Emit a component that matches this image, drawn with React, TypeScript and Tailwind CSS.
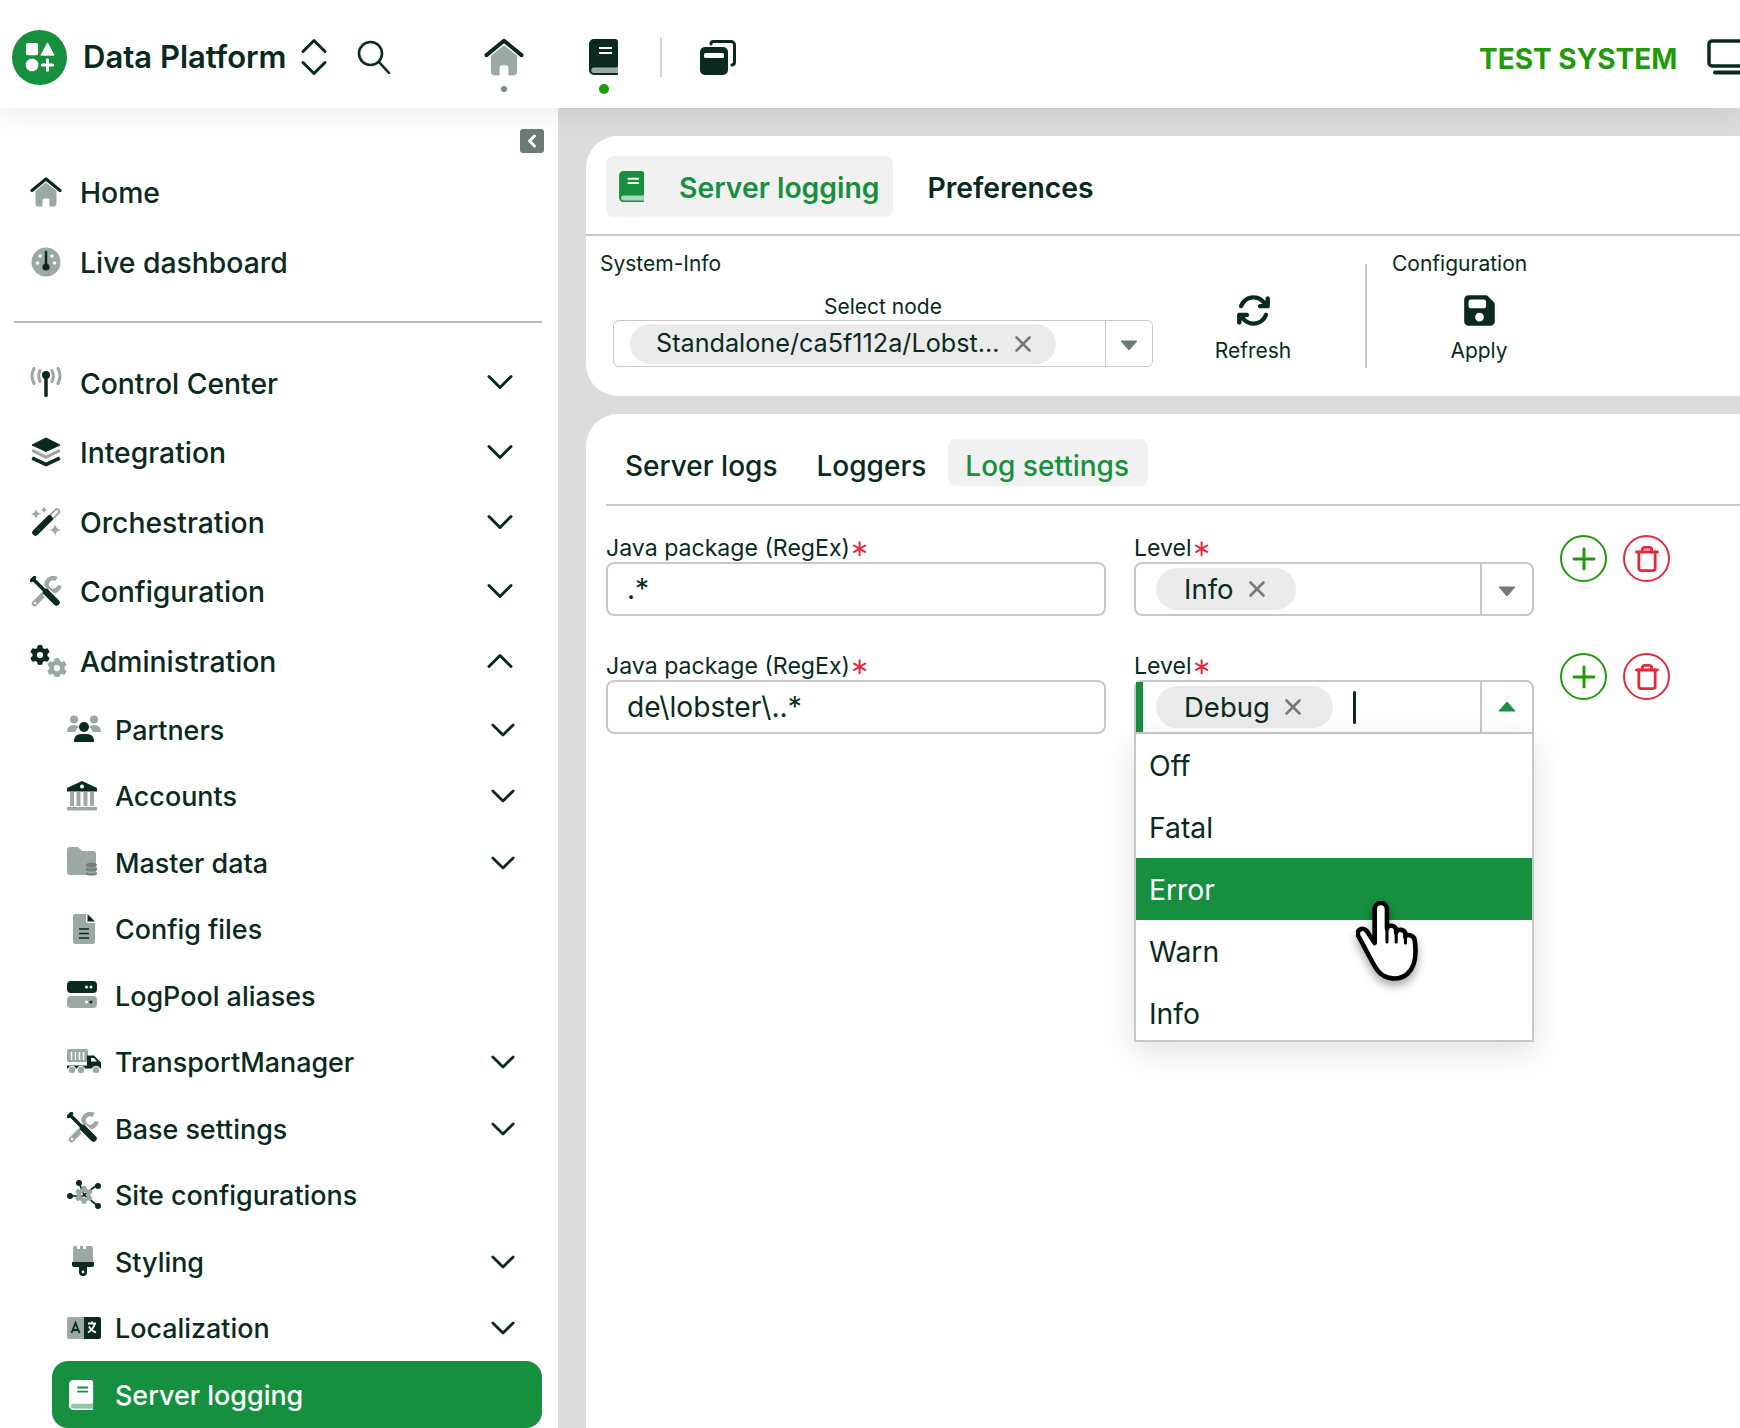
import type { ReactNode } from "react";
import { ChevronLeft, Plus, Trash, X } from "lucide-react";
import { FaArrowsRotate, FaFloppyDisk, FaGear } from "react-icons/fa6";

const D = "#0a2a20";
const G = "#9ba8a3";

function Ico({ children, w = 32, h = 32 }: { children: ReactNode; w?: number; h?: number }) {
  return (
    <svg width={w} height={h} viewBox="0 0 32 32" fill="none" className="shrink-0">
      {children}
    </svg>
  );
}

const HomeIcon = ({ w = 32, h = 32 }: { w?: number; h?: number }) => (
  <Ico w={w} h={h}>
    <path d="M5.500 15 16 6.500 26.500 15v12.500a3 3 0 0 1-3 3H19.500v-6a2 2 0 0 0-2-2h-3a2 2 0 0 0-2 2v6H8.500a3 3 0 0 1-3-3Z" fill={G} />
    <path d="M2 14.500 16 3l14 11.500" stroke={D} strokeWidth="3.200" strokeLinecap="round" strokeLinejoin="round" />
  </Ico>
);

const GaugeIcon = () => (
  <Ico>
    <circle cx="16" cy="16" r="14.500" fill={G} />
    <circle cx="7.500" cy="17" r="1.800" fill="#fff" />
    <circle cx="10" cy="10" r="1.800" fill="#fff" />
    <circle cx="22" cy="10" r="1.800" fill="#fff" />
    <circle cx="24.500" cy="17" r="1.800" fill="#fff" />
    <path d="M16 6v14" stroke={D} strokeWidth="2.500" strokeLinecap="round" />
    <circle cx="16" cy="21" r="3.600" fill={D} />
  </Ico>
);

const AntennaIcon = () => (
  <Ico>
    <path d="M4 1.500Q0 9 4 16.500M10 3.500q-2.500 5.500 0 11M28 1.500q4 7.500 0 15M22 3.500q2.500 5.500 0 11" stroke={G} strokeWidth="3" strokeLinecap="round" />
    <circle cx="16" cy="8" r="4" fill={D} />
    <path d="M16 9v19.500" stroke={D} strokeWidth="3.500" strokeLinecap="round" />
  </Ico>
);

const LayersIcon = () => (
  <Ico>
    <path d="M16 2 30 9 16 15.500 2 9Z" fill={D} stroke={D} strokeLinejoin="round" />
    <path d="M3 13.500 16 20l13-6.500 1 2-14 7-14-7Z" fill={G} stroke={G} strokeLinejoin="round" />
    <path d="M3 21 16 27l13-6 1 2.500L16 30 2 23.500Z" fill={D} stroke={D} strokeLinejoin="round" />
  </Ico>
);

const Star = ({ x, y, r }: { x: number; y: number; r: number }) => (
  <path d={`M${x} ${y - r}q.8 ${r * 0.8} ${r} ${r}q-${r * 0.8} .2 -${r} ${r}q-.2 -${r * 0.8} -${r} -${r}q${r * 0.8} -.2 ${r} -${r}Z`} fill={G} />
);

const WandIcon = () => (
  <Ico>
    <Star x={6} y={8} r={5} />
    <Star x={14} y={4} r={3.500} />
    <Star x={25} y={24} r={6} />
    <path d="M21 11.500 27 5.500" stroke={G} strokeWidth="6.500" strokeLinecap="round" />
    <path d="M21.500 11 27 5.500" stroke="#fff" strokeWidth="2.500" strokeLinecap="round" />
    <path d="M5.500 26.500 19.500 12.500" stroke={D} strokeWidth="6.500" strokeLinecap="round" />
  </Ico>
);

const ToolsIcon = () => (
  <Ico>
    <path d="M4.500 27.500 18 14" stroke={G} strokeWidth="5.500" strokeLinecap="round" />
    <circle cx="5" cy="27" r="1.300" fill="#fff" />
    <path d="M26.500 3A6.500 6.500 0 1 0 29.500 9.500" stroke={G} strokeWidth="4.500" strokeLinecap="butt" />
    <path d="M3 3 15 15" stroke="#fff" strokeWidth="6.500" />
    <path d="M16 16 26.500 26.500" stroke="#fff" strokeWidth="9" />
    <path d="M3 3 15 15" stroke={D} strokeWidth="3.500" strokeLinecap="round" />
    <path d="M4.500 1.500 1.500 4.500" stroke={D} strokeWidth="3.500" strokeLinecap="round" />
    <path d="M16 16 26.500 26.500" stroke={D} strokeWidth="6.500" strokeLinecap="round" />
  </Ico>
);

const GearsIcon = () => (
  <svg width="38" height="32" viewBox="0 0 38 32" className="shrink-0">
    <FaGear x={0} y={0} size={20} color={D} />
    <FaGear x={17} y={13} size={20} color={G} />
  </svg>
);

const UsersIcon = () => (
  <svg width="34" height="28" viewBox="0 0 34 28" className="shrink-0">
    <circle cx="7" cy="4.500" r="4" fill={G} />
    <circle cx="27" cy="4.500" r="4" fill={G} />
    <path d="M0 17q0-7 7-7 3 0 5 2-3 2-4 5Z M34 17q0-7-7-7-3 0-5 2 3 2 4 5Z" fill={G} />
    <circle cx="17" cy="12" r="5" fill={D} />
    <path d="M7 27q0-8 7-8h6q7 0 7 8Z" fill={D} />
  </svg>
);

const BankIcon = () => (
  <svg width="30" height="30" viewBox="0 0 30 30" className="shrink-0">
    <path d="M3 11h4v14H3zM9.500 11h4v14h-4zM16.500 11h4v14h-4zM23 11h4v14h-4z" fill={G} />
    <rect x="0" y="26" width="30" height="3.500" rx="1" fill={G} />
    <path d="M15 0 30 7v3.500H0V7Z" fill={D} />
    <circle cx="15" cy="5.500" r="2" fill="#fff" />
  </svg>
);

const FolderIcon = () => (
  <svg width="32" height="30" viewBox="0 0 32 30" className="shrink-0">
    <path d="M0 3a3 3 0 0 1 3-3h8l4 4h11a3 3 0 0 1 3 3v19a2 2 0 0 1-2 2H3a3 3 0 0 1-3-3Z" fill={G} />
    <ellipse cx="24.500" cy="18" rx="5.500" ry="2.600" fill="#6f7f79" />
    <path d="M19 20c1 2 10 2 11 0v3c-1 2-10 2-11 0ZM19 25c1 2 10 2 11 0v2c-1 2-10 2-11 0Z" fill="#6f7f79" />
  </svg>
);

const FileIcon = () => (
  <svg width="22" height="30" viewBox="0 0 22 30" className="shrink-0">
    <path d="M2 0h11v7a2 2 0 0 0 2 2h7v19a2 2 0 0 1-2 2H2a2 2 0 0 1-2-2V2a2 2 0 0 1 2-2Z" fill={G} />
    <path d="M14.500 0 22 7.500h-7.500Z" fill={D} />
    <path d="M6 15h10M6 19.500h10M6 24h10" stroke={D} strokeWidth="1.600" />
  </svg>
);

const ServerIcon = () => (
  <svg width="30" height="28" viewBox="0 0 30 28" className="shrink-0">
    <rect x="0" y="0" width="30" height="12" rx="4" fill={D} />
    <rect x="0" y="15" width="30" height="12" rx="4" fill={G} />
    <circle cx="19.500" cy="6" r="1.500" fill="#fff" />
    <circle cx="24" cy="6" r="1.500" fill="#fff" />
    <circle cx="24" cy="21" r="1.500" fill={D} />
    <circle cx="19.500" cy="21" r="1.500" fill="#fff" />
  </svg>
);

const TruckIcon = () => (
  <svg width="34" height="26" viewBox="0 0 34 26" className="shrink-0">
    <rect x="0" y="0" width="21" height="13" rx="2" fill={G} />
    <path d="M4.500 3v8M8.500 3v8M12.500 3v8M16.500 3v8" stroke="#fff" strokeWidth="1.500" />
    <path d="M0 15.500h20v-9h7l7 7v6H0Z" fill={D} />
    <path d="M24 9h3l3 3.500h-6Z" fill="#fff" />
    <rect x="0" y="15" width="20" height="1.500" fill="#fff" />
    <circle cx="5" cy="21" r="3.800" fill={G} stroke="#fff" strokeWidth="1" />
    <circle cx="14" cy="21" r="3.800" fill={G} stroke="#fff" strokeWidth="1" />
    <circle cx="29" cy="21" r="3.800" fill={G} stroke="#fff" strokeWidth="1" />
  </svg>
);

const NodesIcon = () => (
  <svg width="34" height="30" viewBox="0 0 34 30" className="shrink-0">
    <path d="M12 3 17 15M30 5 17 15M3 16h14M31 26 17 15" stroke={D} strokeWidth="1.600" />
    <circle cx="12" cy="3" r="3" fill={D} />
    <circle cx="31" cy="6" r="3" fill={D} />
    <circle cx="3" cy="16" r="3" fill={D} />
    <circle cx="31" cy="26" r="3" fill={D} />
    <FaGear x={8} y={6} size={18} color={G} />
  </svg>
);

const BrushIcon = () => (
  <svg width="22" height="30" viewBox="0 0 22 30" className="shrink-0">
    <path d="M1 2a2 2 0 0 1 2-2h2v3h3V0h3v3h3V0h5a2 2 0 0 1 2 2v14H1Z" fill={G} />
    <path d="M0 16h22v3a2 2 0 0 1-2 2h-5v5a4 4 0 0 1-8 0v-5H2a2 2 0 0 1-2-2Z" fill={D} />
    <circle cx="11" cy="26" r="1.400" fill="#fff" />
  </svg>
);

const LangIcon = () => (
  <svg width="34" height="22" viewBox="0 0 34 22" className="shrink-0">
    <path d="M2 0h15v22H2a2 2 0 0 1-2-2V2a2 2 0 0 1 2-2Z" fill={G} />
    <path d="M17 0h15a2 2 0 0 1 2 2v18a2 2 0 0 1-2 2H17Z" fill={D} />
    <path d="M4.500 16 8.500 6l4 10M6 13h5" stroke={D} strokeWidth="1.800" fill="none" />
    <path d="M21 6.500h8M25 4.500v2M28 6.500q-2 6-7 9M22 9.500q2 4 7 6" stroke="#fff" strokeWidth="1.800" fill="none" />
  </svg>
);

const BookIcon = ({ body = D, band = G, mark = "#fff", w = 30, h = 36 }: { body?: string; band?: string; mark?: string; w?: number; h?: number }) => (
  <svg width={w} height={h} viewBox="0 0 30 36" className="shrink-0">
    <path d="M5 0h21a3 3 0 0 1 3 3v24a2 2 0 0 1-2 2H6a2.500 2.500 0 0 0 0 5h22a1 1 0 0 1 1 1v1H5a5 5 0 0 1-5-5V5a5 5 0 0 1 5-5Z" fill={body} />
    <path d="M5 28.500h24v5.500H5a2.750 2.750 0 0 1 0-5.500Z" fill={band} />
    <path d="M10 9h13M10 14h13" stroke={mark} strokeWidth="2.200" />
  </svg>
);

const CopyIcon = () => (
  <svg width="36" height="35" viewBox="0 0 36 35" className="shrink-0">
    <path d="M11 4V3.500A2.500 2.500 0 0 1 13.500 1.500H31A3.500 3.500 0 0 1 34.500 5v17A3 3 0 0 1 32 25" stroke={D} strokeWidth="3" fill="none" strokeLinecap="round" />
    <rect x="0" y="7" width="28" height="28" rx="5" fill={D} />
    <rect x="4" y="13" width="20" height="5" rx="1.500" fill="#fff" />
  </svg>
);

const SearchIcon = () => (
  <svg width="34" height="34" viewBox="0 0 34 34" className="ml-[30px] shrink-0">
    <circle cx="13.500" cy="13.500" r="11.500" fill="none" stroke={D} strokeWidth="2.600" />
    <path d="M22 22 32 33" stroke={D} strokeWidth="2.600" strokeLinecap="round" />
  </svg>
);

const ChevronDownIcon = ({ up = false, w = 26, className = "" }: { up?: boolean; w?: number; className?: string }) => (
  <svg width={w} height="16" viewBox="0 0 26 16" className={`shrink-0 ${up ? "rotate-180" : ""} ${className}`}>
    <path d="M2 2.500 13 13.500 24 2.500" fill="none" stroke={D} strokeWidth="3" strokeLinecap="round" strokeLinejoin="round" />
  </svg>
);

const Caret = ({ up = false }: { up?: boolean }) => (
  <svg width="18" height="11" viewBox="0 0 18 11">
    {up ? (
      <path d="M9 1 17 10H1Z" fill="#168f3f" stroke="#168f3f" strokeLinejoin="round" />
    ) : (
      <path d="M1 1h16L9 10Z" fill="#6f7a76" stroke="#6f7a76" strokeLinejoin="round" />
    )}
  </svg>
);

function Logo() {
  return (
    <div className="flex h-[55px] w-[55px] shrink-0 items-center justify-center rounded-full bg-[#168f3f]">
      <svg width="30" height="30" viewBox="0 0 32 32">
        <rect x="1" y="1" width="13" height="13" rx="2" fill="#fff" />
        <path d="M24 1 31 14H17Z" fill="#fff" stroke="#fff" strokeLinejoin="round" />
        <circle cx="7.500" cy="24.500" r="6.800" fill="#fff" />
        <path d="M24 19v11M18.500 24.500h11" stroke="#fff" strokeWidth="3.200" strokeLinecap="round" />
      </svg>
    </div>
  );
}

function Header() {
  return (
    <header className="relative z-10 flex h-[108px] shrink-0 items-center overflow-hidden bg-white pl-[12px] pt-[6px] shadow-[0_6px_26px_rgba(0,0,0,0.08)]">
      <Logo />
      <span className="ml-[16px] w-[203px] shrink-0 whitespace-nowrap pt-px text-[31px] font-semibold text-[#0a2a20]">Data Platform</span>
      <div className="ml-[15px] flex w-[26px] shrink-0 flex-col gap-[6px]">
        <ChevronDownIcon up />
        <ChevronDownIcon />
      </div>
      <SearchIcon />
      <div className="relative ml-[93px] w-[40px] shrink-0">
        <HomeIcon w={40} h={40} />
        <span className="absolute left-[17px] top-[49px] h-[6px] w-[6px] rounded-full bg-[#7a8a85]" />
      </div>
      <div className="relative ml-[65px] w-[30px] shrink-0">
        <BookIcon />
        <span className="absolute left-[10px] top-[45px] h-[10px] w-[10px] rounded-full bg-[#1f9a0a]" />
      </div>
      <div className="ml-[41px] h-[40px] w-[2px] shrink-0 bg-[#d6d6d6]" />
      <div className="ml-[38px] shrink-0">
        <CopyIcon />
      </div>
      <span className="ml-[743px] w-[198px] shrink-0 whitespace-nowrap pt-[3px] text-[28px] font-bold text-[#1f9a0a]">TEST SYSTEM</span>
      <svg width="50" height="36" viewBox="0 0 50 36" className="ml-[30px] shrink-0">
        <rect x="2" y="2" width="46" height="25" rx="3" fill="none" stroke={D} strokeWidth="3.500" />
        <path d="M8 33.500h40" stroke={D} strokeWidth="4" strokeLinecap="round" />
      </svg>
    </header>
  );
}

function NavRow({ icon, label, chevron }: { icon: ReactNode; label: string; chevron?: "up" | "down" }) {
  return (
    <div className="flex h-[70px] items-center pl-[30px] pr-[45px] text-[#0a2a20]">
      <div className="flex w-[50px] shrink-0 items-center">{icon}</div>
      <span className="flex-1 whitespace-nowrap pt-[2px] text-[28.300px] font-medium">{label}</span>
      {chevron && <ChevronDownIcon up={chevron === "up"} className="-mt-px" />}
    </div>
  );
}

function SubRow({ icon, label, chevron = true }: { icon: ReactNode; label: string; chevron?: boolean }) {
  return (
    <div className="flex h-[66.500px] items-center pl-[15px] pr-[27px] text-[#0a2a20]">
      <div className="flex w-[48px] shrink-0 items-center justify-start">{icon}</div>
      <span className="flex-1 whitespace-nowrap pt-px text-[26.900px] font-medium">{label}</span>
      {chevron && <ChevronDownIcon w={24} className="mt-px" />}
    </div>
  );
}

function Sidebar() {
  return (
    <aside className="flex w-[558px] shrink-0 flex-col overflow-hidden bg-white">
      <div className="flex justify-end pr-[14px] pt-[21px]">
        <div className="flex h-[24px] w-[24px] items-center justify-center rounded-[3px] bg-[#6b7a74]">
          <ChevronLeft size={20} strokeWidth={3.500} color="#fff" />
        </div>
      </div>
      <div className="mt-[4px]">
        <NavRow icon={<HomeIcon />} label="Home" />
        <NavRow icon={<GaugeIcon />} label="Live dashboard" />
      </div>
      <div className="mb-[25px] ml-[14px] mr-[16px] mt-[24px] h-[2px] bg-[#b8bdbb]" />
      <NavRow icon={<AntennaIcon />} label="Control Center" chevron="down" />
      <NavRow icon={<LayersIcon />} label="Integration" chevron="down" />
      <NavRow icon={<WandIcon />} label="Orchestration" chevron="down" />
      <NavRow icon={<ToolsIcon />} label="Configuration" chevron="down" />
      <NavRow icon={<GearsIcon />} label="Administration" chevron="up" />
      <div className="ml-[52px] mr-[16px]">
        <SubRow icon={<UsersIcon />} label="Partners" />
        <SubRow icon={<BankIcon />} label="Accounts" />
        <SubRow icon={<FolderIcon />} label="Master data" />
        <SubRow icon={<div className="pl-[6px]"><FileIcon /></div>} label="Config files" chevron={false} />
        <SubRow icon={<ServerIcon />} label="LogPool aliases" chevron={false} />
        <SubRow icon={<TruckIcon />} label="TransportManager" />
        <SubRow icon={<ToolsIcon />} label="Base settings" />
        <SubRow icon={<NodesIcon />} label="Site configurations" chevron={false} />
        <SubRow icon={<div className="pl-[5px]"><BrushIcon /></div>} label="Styling" />
        <SubRow icon={<LangIcon />} label="Localization" />
        <div className="flex h-[67px] items-center rounded-[16px] bg-[#168f3f] pl-[17px] text-white">
          <div className="w-[46px]">
            <BookIcon body="#fff" band="#8fc7a3" mark="#168f3f" w={25} h={30} />
          </div>
          <span className="whitespace-nowrap pt-px text-[26.900px] font-medium">Server logging</span>
        </div>
      </div>
    </aside>
  );
}

function ChipX() {
  return <X size={26} strokeWidth={2.400} color="#777" className="ml-[10px] shrink-0" />;
}

function Chip({ label, className }: { label: string; className: string }) {
  return (
    <div className={`flex h-[42px] shrink-0 items-center rounded-full bg-[#ebebeb] text-[#0a2a20] ${className}`}>
      <span className="whitespace-nowrap pt-[2px] text-[27.500px]">{label}</span>
      <ChipX />
    </div>
  );
}

function Label({ text, required }: { text: string; required?: boolean }) {
  return (
    <div className="flex h-[28px] items-center whitespace-nowrap text-[23.100px] leading-[28px] text-[#0a2a20]">
      {text}
      {required && <span className="text-[#e6283c]">∗</span>}
    </div>
  );
}

function RoundBtn({ kind }: { kind: "add" | "del" }) {
  return kind === "add" ? (
    <div className="flex h-[47px] w-[47px] items-center justify-center rounded-full border-[2.500px] border-[#1f9a0a]">
      <Plus size={34} strokeWidth={2.100} color="#1f9a0a" />
    </div>
  ) : (
    <div className="flex h-[47px] w-[47px] items-center justify-center rounded-full border-[2.500px] border-[#e6283c]">
      <Trash size={28} strokeWidth={2.400} color="#e6283c" />
    </div>
  );
}

function FormRow({ value, open }: { value: string; open?: boolean }) {
  const items = ["Off", "Fatal", "Error", "Warn", "Info"];
  return (
    <div className="flex">
      <div className="w-[500px]">
        <Label text="Java package (RegEx)" required />
        <div className="flex h-[54px] items-center rounded-[8px] border-2 border-[#c8c8c8] px-[19px] pt-px text-[28.200px] text-[#0a2a20]">
          {value}
        </div>
      </div>
      <div className="relative ml-[28px] w-[400px]">
        <Label text="Level" required />
        <div className={`relative flex h-[54px] items-center border-2 border-[#c8c8c8] pl-[20px] ${open ? "rounded-t-[8px]" : "rounded-[8px]"}`}>
          {open && <div className="absolute bottom-0 left-0 top-0 w-[7px] bg-[#168f3f]" />}
          {open ? <Chip label="Debug" className="pl-[28px] pr-[27px]" /> : <Chip label="Info" className="pl-[28px] pr-[26px]" />}
          {open && <div className="ml-[20px] h-[33px] w-[3px] rounded-full bg-[#0a2a20]" />}
          <div className={`ml-auto flex h-full w-[52px] items-center justify-center border-l-2 border-[#c8c8c8] ${open ? "pb-[2px]" : "pt-[5px]"}`}>
            <Caret up={open} />
          </div>
        </div>
        {open && (
          <div className="absolute left-0 right-0 top-[82px] z-20 h-[308px] overflow-hidden border-2 border-t-0 border-[#c8c8c8] bg-white shadow-[0_10px_30px_rgba(0,0,0,0.12)]">
            {items.map((item) => (
              <div
                key={item}
                className={`flex h-[62px] items-center pl-[13px] pt-[2px] text-[28.300px] ${item === "Error" ? "bg-[#168f3f] text-white" : "text-[#0a2a20]"}`}
              >
                {item}
              </div>
            ))}
          </div>
        )}
        {open && (
          <svg width="64" height="82" viewBox="0 0 62 80" className="absolute left-[222px] top-[249px] z-30 drop-shadow-[0_5px_5px_rgba(0,0,0,0.35)]">
            <path
              d="M18 8a6 6 0 0 1 12 0v19c1-4 8-4 9 1v3c1-4 8-4 9 1v3c1-3 8-2 9 3 2 14 1 26-7 33-8 7-22 6-29-3-6-8-13-24-19-34-2-6 4-9 8-5 3 4 5 8 8 12Z"
              fill="#fff"
              stroke="#000"
              strokeWidth="4.500"
              strokeLinejoin="round"
            />
            <path d="M30 27v13M39 29v11M48 33v8" stroke="#000" strokeWidth="3" strokeLinecap="round" fill="none" />
          </svg>
        )}
      </div>
      <div className="ml-[26px] flex gap-[16px] pt-px">
        <RoundBtn kind="add" />
        <RoundBtn kind="del" />
      </div>
    </div>
  );
}

function TopCard() {
  return (
    <section className="h-[260px] shrink-0 rounded-l-[32px] bg-white">
      <div className="flex h-[100px] items-start border-b-2 border-[#c8c8c8] pl-[20px] pt-[20px]">
        <div className="flex h-[61px] items-center rounded-[8px] bg-[#f1f1f1] pl-[13px] pr-[14px]">
          <BookIcon body="#168f3f" band="#a9d6b8" mark="#fff" w={26} h={31} />
          <span className="ml-[34px] whitespace-nowrap pt-[3px] text-[28.300px] font-semibold text-[#168f3f]">Server logging</span>
        </div>
        <div className="flex h-[61px] items-center pl-[34px]">
          <span className="whitespace-nowrap pt-[3px] text-[28.300px] font-semibold text-[#0a2a20]">Preferences</span>
        </div>
      </div>
      <div className="flex pl-[14px] pt-[14px]">
        <div className="w-[765px]">
          <div className="h-[28px] text-[21px] leading-[28px] text-[#0a2a20]">System-Info</div>
          <div className="mt-[15px] flex pl-[13px]">
            <div className="w-[540px]">
              <div className="h-[27px] text-center text-[21px] leading-[28px] text-[#0a2a20]">Select node</div>
              <div className="flex h-[47px] items-center rounded-[6px] border-[1.500px] border-[#c8c8c8] pl-[16px]">
                <div className="flex h-[40px] w-[426px] shrink-0 items-center rounded-full bg-[#ebebeb] pl-[26px] text-[#0a2a20]">
                  <span className="whitespace-nowrap text-[25.200px]">Standalone/ca5f112a/Lobst...</span>
                  <ChipX />
                </div>
                <div className="ml-auto flex h-full w-[47px] items-center justify-center border-l-[1.500px] border-[#c8c8c8] pt-[3px]">
                  <Caret />
                </div>
              </div>
            </div>
            <div className="ml-[50px] flex w-[100px] flex-col items-center">
              <FaArrowsRotate size={35} color={D} />
              <span className="mt-[9px] text-[21px] leading-[28px] text-[#0a2a20]">Refresh</span>
            </div>
          </div>
        </div>
        <div className="mt-[14px] h-[104px] w-[2px] bg-[#c8c8c8]" />
        <div className="ml-[25px]">
          <div className="h-[28px] text-[21px] leading-[28px] text-[#0a2a20]">Configuration</div>
          <div className="ml-[37px] mt-[15px] flex w-[100px] flex-col items-center">
            <FaFloppyDisk size={35} color={D} />
            <span className="mt-[9px] text-[21px] leading-[28px] text-[#0a2a20]">Apply</span>
          </div>
        </div>
      </div>
    </section>
  );
}

function BottomCard() {
  return (
    <section className="flex-1 rounded-tl-[32px] bg-white pl-[20px]">
      <div className="flex h-[92px] items-start border-b-2 border-[#c8c8c8] pl-[2px] pt-[25px]">
        <div className="flex h-[47px] items-center px-[17px] pt-[6px] text-[28px] font-medium text-[#0a2a20]">Server logs</div>
        <div className="ml-[5px] flex h-[47px] items-center px-[17px] pt-[6px] text-[28px] font-medium text-[#0a2a20]">Loggers</div>
        <div className="ml-[5px] flex h-[47px] items-center rounded-[8px] bg-[#f1f1f1] pl-[17px] pr-[19px] pt-[6px] text-[28px] font-medium text-[#168f3f]">Log settings</div>
      </div>
      <div className="flex flex-col gap-[36px] pt-[28px]">
        <FormRow value=".*" />
        <FormRow value="de\lobster\..*" open />
      </div>
    </section>
  );
}

export default function App() {
  return (
    <div className="flex h-[1428px] w-full flex-col overflow-hidden bg-white [font-family:Inter,sans-serif]">
      <Header />
      <div className="flex min-h-0 flex-1">
        <Sidebar />
        <main className="flex min-w-0 flex-1 flex-col gap-[18px] bg-[#dcdcdc] pl-[28px] pt-[28px]">
          <TopCard />
          <BottomCard />
        </main>
      </div>
    </div>
  );
}
